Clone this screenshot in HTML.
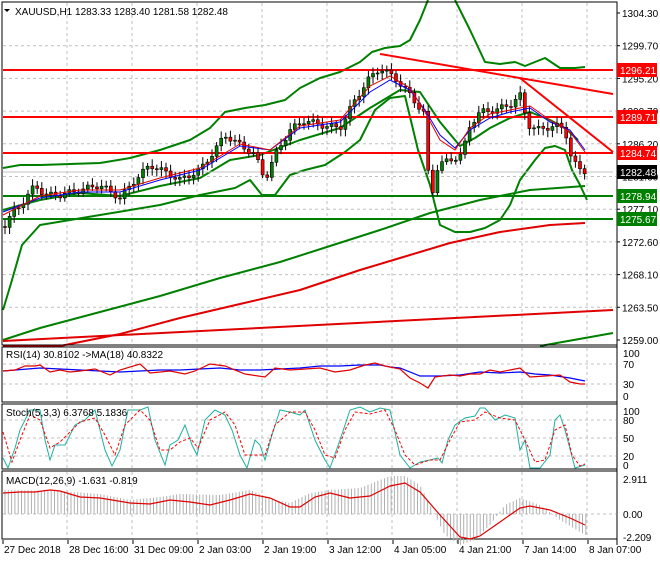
<!DOCTYPE html>
<html><head><meta charset="utf-8"><style>
body{margin:0;background:#fff;width:660px;height:560px;overflow:hidden;font-family:"Liberation Sans",sans-serif}
svg text{font-family:"Liberation Sans",sans-serif;font-size:10px}
</style></head><body>
<svg id="s" width="660" height="560" viewBox="0 0 660 560" xmlns="http://www.w3.org/2000/svg">
<rect width="660" height="560" fill="#fff"/>
<g id="grid" stroke="#c0c0c0" stroke-dasharray="3,3" stroke-width="1"></g>
<g fill="none" stroke-linejoin="round">
<polyline stroke="#008000" stroke-width="2" points="3,340 40,328 100,312 160,296 220,278 280,262 330,246 380,230 430,213 480,200 530,190 585,186"/>
<polyline stroke="#e00000" stroke-width="2" points="3,346 60,346 120,334 180,318 240,304 300,290 360,270 400,258 450,243 500,232 550,225 585,223"/>
<line x1="3" y1="341" x2="613" y2="310" stroke="#e00000" stroke-width="2"/>
<line x1="540" y1="346" x2="613" y2="333" stroke="#008000" stroke-width="2"/>
<polyline stroke="#008000" stroke-width="2" points="3,168 20,165 40,165 70,164 100,163 130,158 160,150 190,140 210,128 225,112 245,108 265,105 285,100 300,88 320,78 340,72 360,62 372,52 385,48 400,46 410,40 420,20 428,0"/>
<polyline stroke="#008000" stroke-width="2" points="455,0 470,30 485,62 500,64 515,62 525,66 535,62 545,58 560,68 575,68 585,67"/>
<polyline stroke="#008000" stroke-width="2" points="3,310 12,280 22,245 40,225 70,220 100,215 130,210 160,205 200,195 235,188 250,180 262,195 275,195 290,175 305,170 325,165 345,152 360,140 375,110 390,98 405,96 418,150 430,185 440,225 455,232 470,232 485,228 500,220 510,205 520,180 535,160 545,148 555,146 565,150 572,170 580,185 587,200"/>
<polyline stroke="#008000" stroke-width="2" points="3,210 40,200 80,193 120,196 160,186 200,178 230,160 260,155 300,140 340,128 370,108 400,90 420,92 440,122 460,146 475,138 490,128 510,118 530,112 550,120 565,128 578,140"/>
<line x1="3" y1="70" x2="613" y2="70" stroke="#ff0000" stroke-width="2"/>
<line x1="3" y1="117" x2="613" y2="117" stroke="#ff0000" stroke-width="2"/>
<line x1="3" y1="153" x2="613" y2="153" stroke="#ff0000" stroke-width="2"/>
<line x1="3" y1="196" x2="613" y2="196" stroke="#008000" stroke-width="2"/>
<line x1="3" y1="219" x2="613" y2="219" stroke="#008000" stroke-width="2"/>
<line x1="3" y1="172" x2="613" y2="172" stroke="#c0c0c0" stroke-width="1"/>
<line x1="380" y1="54" x2="613" y2="94" stroke="#ff0000" stroke-width="2"/>
<line x1="520" y1="78" x2="613" y2="152" stroke="#ff0000" stroke-width="2"/>
</g>
<g id="candles"></g>
<g fill="none" stroke-width="1">
<polyline stroke="#0000ff" points="3,212 40,198 80,192 120,192 160,180 200,170 240,146 270,150 300,128 340,122 370,92 390,80 410,90 425,110 440,135 455,148 470,130 490,118 510,112 530,108 550,122 570,130 585,150"/>
<polyline stroke="#e00000" points="3,215 40,196 80,190 120,190 160,178 200,168 240,144 270,150 300,126 340,120 370,86 390,76 410,88 425,112 440,140 455,150 470,128 490,114 510,110 530,106 550,120 570,132 585,152"/>
</g>
<line x1="617" y1="2" x2="617" y2="545" stroke="#000"/>
<rect x="2" y="2" width="615" height="343" fill="none" stroke="#000"/>
<rect x="2" y="347" width="615" height="55" fill="none" stroke="#000"/>
<rect x="2" y="404" width="615" height="65" fill="none" stroke="#000"/>
<rect x="2" y="471" width="615" height="68" fill="none" stroke="#000"/>
<g id="axis" fill="#000"></g>
<g fill="none" stroke-width="1.2">
<polyline stroke="#0000ff" points="3,371 40,368 80,370 100,371 120,372 140,371 160,370 180,370 200,369 220,368 240,370 260,370 280,369 300,368 320,366 340,366 360,365 380,365 390,367 400,368 420,376 440,376 460,375 480,372 500,373 520,372 535,374 550,375 570,378 585,381"/>
<polyline stroke="#e00000" points="3,371 15,370 25,366 35,366 40,365 50,372 60,370 70,372 80,371 95,369 110,375 120,370 140,364 150,373 170,371 185,374 195,371 210,364 225,366 245,374 265,377 275,368 290,370 305,369 320,368 335,372 350,370 365,365 375,363 385,366 400,369 410,378 420,383 428,388 435,377 450,375 460,376 470,374 480,374 490,370 500,372 510,370 520,368 530,377 545,376 560,375 570,382 580,384 585,384"/>
</g>
<g fill="none" stroke-width="1">
<polyline stroke="#20b0a0" points="3,458 8,468 15,448 20,430 30,410 40,410 45,440 50,460 55,445 65,445 70,435 75,425 85,420 95,410 105,450 112,466 120,450 128,410 140,410 148,407 155,440 165,465 170,445 178,440 185,425 192,445 197,455 205,420 215,410 225,415 232,430 240,455 247,468 255,440 260,445 265,460 272,435 280,410 290,412 300,415 305,410 315,440 325,460 330,468 340,440 350,410 360,407 370,412 380,408 390,410 400,455 410,468 420,462 430,460 438,458 442,463 448,440 455,425 465,418 475,416 480,408 485,408 495,420 505,415 515,418 520,450 525,440 530,468 540,468 550,455 555,420 560,415 565,430 575,468 585,465"/>
<polyline stroke="#ff0000" stroke-dasharray="3,2" points="3,432 12,462 20,440 30,415 40,420 50,448 60,442 70,432 80,422 95,418 105,435 115,455 125,425 140,410 150,420 160,450 170,450 180,442 190,438 198,448 210,420 225,412 235,425 245,455 255,455 265,455 275,425 290,412 305,412 315,430 325,455 335,458 345,430 355,412 370,414 385,410 395,430 405,455 415,465 430,460 440,460 450,440 460,422 475,420 485,412 500,418 515,420 525,440 535,462 545,460 555,430 565,425 572,455 580,466 585,464"/>
</g>
<g id="hist" stroke="#b0b0b0" stroke-width="1"></g>
<polyline fill="none" stroke="#e00000" stroke-width="1.2" points="3,493 20,492 35,492 50,490 60,491 80,497 100,498 130,503 150,504 170,500 190,502 210,505 230,500 250,494 270,498 290,507 300,507 315,497 330,493 350,498 370,496 390,486 405,483 420,492 440,515 460,537 470,539 480,536 500,522 520,508 530,506 550,510 570,518 585,525"/>
<text x="15" y="15">XAUUSD,H1  1283.33 1283.40 1281.58 1282.48</text>
<path d="M4,9 L10,9 L7,12 Z" fill="#000"/>
<text x="6" y="358" font-size="9.5">RSI(14) 30.8102  -&gt;MA(18) 40.8322</text>
<text x="6" y="416" font-size="9.5">Stoch(5,3,3) 6.3768 5.1836</text>
<text x="6" y="484" font-size="9.5">MACD(12,26,9) -1.631 -0.819</text>
</svg>
<script>
var ns="http://www.w3.org/2000/svg",s=document.getElementById('s');
function el(p,t,a,txt){var e=document.createElementNS(ns,t);for(var k in a)e.setAttribute(k,a[k]);if(txt)e.textContent=txt;p.appendChild(e);return e;}
var g=document.getElementById('grid');
var xs=[2,67,132,197,262,327,392,457,522,587];
xs.forEach(function(x){if(x>2){el(g,'line',{x1:x,y1:3,x2:x,y2:345});el(g,'line',{x1:x,y1:348,x2:x,y2:402});el(g,'line',{x1:x,y1:405,x2:x,y2:469});el(g,'line',{x1:x,y1:472,x2:x,y2:539});}});
var ax=document.getElementById('axis');
var pr=['1304.30','1299.70','1295.20','1290.70','1286.20','1281.60','1277.10','1272.60','1268.10','1263.50','1259.00'];
pr.forEach(function(p,i){var y=13+i*32.7;if(i>0&&i<10)el(g,'line',{x1:3,y1:y,x2:616,y2:y});el(ax,'line',{x1:617,y1:y,x2:620,y2:y,stroke:'#000'});el(ax,'text',{x:622,y:y+4,'font-size':'10'},p);});
[[353,'100'],[364,'70'],[384,'30'],[396,'0']].forEach(function(a){el(ax,'text',{x:623,y:a[0]+4,'font-size':'9.5'},a[1]);});
el(g,'line',{x1:3,y1:364,x2:616,y2:364});el(g,'line',{x1:3,y1:384,x2:616,y2:384});
[[411,'100'],[420,'80'],[438,'50'],[456,'20'],[465,'0']].forEach(function(a){el(ax,'text',{x:623,y:a[0]+4,'font-size':'9.5'},a[1]);});
el(g,'line',{x1:3,y1:420,x2:616,y2:420});el(g,'line',{x1:3,y1:438,x2:616,y2:438});el(g,'line',{x1:3,y1:456,x2:616,y2:456});
el(g,'line',{x1:3,y1:514,x2:616,y2:514});
[[479,'2.911'],[514,'0.00'],[537,'-2.209']].forEach(function(a){el(ax,'text',{x:623,y:a[0]+4,'font-size':'9.5'},a[1]);});
var labs=[['27 Dec 2018',2],['28 Dec 16:00',67],['31 Dec 09:00',132],['2 Jan 03:00',197],['2 Jan 19:00',262],['3 Jan 12:00',327],['4 Jan 05:00',392],['4 Jan 21:00',457],['7 Jan 14:00',522],['8 Jan 07:00',587]];
labs.forEach(function(l){el(ax,'line',{x1:l[1]+1,y1:540,x2:l[1]+1,y2:544,stroke:'#000'});el(ax,'text',{x:l[1]+2,y:553,'font-size':'9'},l[0]);});
function box(y,t,bg,fg){el(ax,'rect',{x:617,y:y-7,width:40,height:14,fill:bg});el(ax,'text',{x:620,y:y+4,fill:fg,'font-size':'10'},t);}
box(70,'1296.21','#ff0000','#fff');box(117,'1289.71','#ff0000','#fff');box(153,'1284.74','#ff0000','#fff');box(172,'1282.48','#000','#fff');box(196,'1278.94','#008000','#fff');box(219,'1275.67','#008000','#fff');
var path=[[5,225],[15,210],[25,200],[35,185],[45,195],[60,195],[80,190],[100,185],[120,198],[135,180],[150,165],[165,172],[180,180],[200,170],[215,150],[225,135],[240,145],[255,155],[265,180],[275,155],[290,130],[305,120],[320,125],[340,128],[355,100],[368,80],[380,68],[395,78],[410,95],[425,115],[430,205],[438,165],[450,160],[462,155],[470,125],[480,112],[495,110],[510,105],[520,95],[528,125],[540,130],[555,125],[565,130],[572,160],[580,170],[588,172]];
function at(x){for(var i=1;i<path.length;i++){if(x<=path[i][0]){var a=path[i-1],b=path[i];return a[1]+(b[1]-a[1])*(x-a[0])/(b[0]-a[0]);}}return 172;}
var cg=document.getElementById('candles'),h=document.getElementById('hist');
var prev=at(4);
for(var x=5;x<=588;x+=4.6){var c=at(x)+Math.sin(x*1.7)*3;var o=prev;var hi=Math.min(o,c)-3-Math.abs(Math.sin(x))*4,lo=Math.max(o,c)+3+Math.abs(Math.cos(x*0.7))*4;
el(cg,'line',{x1:x,y1:hi,x2:x,y2:lo,stroke:'#000'});
var up=c<o;el(cg,'rect',{x:x-1.5,y:Math.min(o,c),width:3,height:Math.max(1,Math.abs(o-c)),fill:up?'#008000':'#ff0000',stroke:'#000','stroke-width':0.6});prev=c;}
var hp=[[3,490],[60,491],[100,494],[130,500],[160,497],[180,494],[220,495],[250,490],[275,500],[290,503],[310,493],[330,490],[360,488],[390,476],[405,476],[420,485],[430,505],[445,535],[460,545],[475,540],[490,525],[505,505],[520,498],[540,505],[560,520],[585,535]];
function hat(x){for(var i=1;i<hp.length;i++){if(x<=hp[i][0]){var a=hp[i-1],b=hp[i];return a[1]+(b[1]-a[1])*(x-a[0])/(b[0]-a[0]);}}return 535;}
for(var x=5;x<=586;x+=3.3){el(h,'line',{x1:x,y1:514,x2:x,y2:hat(x)});}
</script>
</body></html>
